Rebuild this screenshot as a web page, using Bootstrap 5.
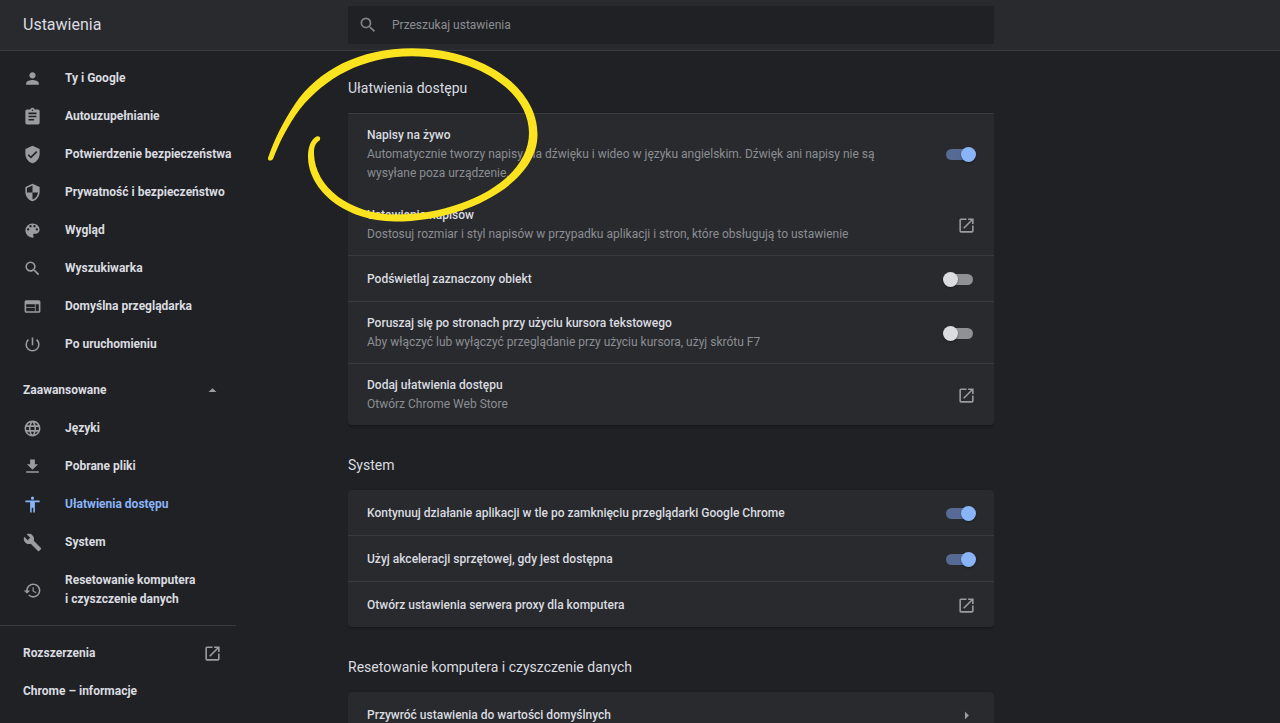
<!DOCTYPE html>
<html lang="pl" data-bs-theme="dark">
<head>
<meta charset="utf-8">
<meta name="viewport" content="width=device-width, initial-scale=1">
<title>Ustawienia</title>
<link href="https://cdn.jsdelivr.net/npm/bootstrap@5.3.0/dist/css/bootstrap.min.css" rel="stylesheet">
<style>
  :root { --page: #202124; --panel: #292a2d; --line: #3a3b3f; --text: #dadce0; --muted: #8b8e93; --icon: #9a9ca0; --accent: #8ab4f8; }
  body { background: var(--page); color: var(--text); font: 500 12px/19px Roboto, "Noto Sans", sans-serif; }
  h1, h2 { color: var(--text); }
  a { color: inherit; text-decoration: none; }
  svg { display: block; fill: currentColor; flex: none; }
  .columns { display: grid; grid-template-columns: minmax(260px, 348fr) minmax(0, 646px) 286fr; }
  .topbar { background: var(--panel); border-bottom: 1px solid var(--line); height: 51px; z-index: 2; }
  .app-title { font-size: 16px; font-weight: 400; padding-left: 23px; }
  .search-box { background: var(--page); color: #7f8287; height: 38px; padding: 0 10px; gap: 14px; }
  .search-box input { font-size: 12px; line-height: 19px; color: var(--text); border-radius: 0; }
  .search-box input::placeholder { color: #8b8e93; opacity: 1; }
  .search-box input:focus { box-shadow: none; }
  .ico { width: 19px; height: 19px; color: var(--icon); }
  .side { width: 240px; padding-top: 8px; }
  .side-link { display: flex; align-items: center; width: 100%; min-height: 38px; padding: 10px 0 9px 23px; gap: 23px; font-weight: 700; color: var(--text); text-align: left; }
  .side-link.justify-content-between { padding-right: 18px; }
  .side-link.active, .side-link.active .ico { color: var(--accent); }
  .side-button { background: none; border: 0; margin-top: 8px; }
  .side-rest { border-top: 1px solid var(--line); margin: 7px 4px 0 0; padding-top: 8px; }
  .side-rest .side-link.justify-content-between { padding-right: 14px; }
  .content-pane { padding-bottom: 40px; scrollbar-width: none; overflow-y: auto; }
  .content-pane::-webkit-scrollbar { display: none; }
  h2 { font-size: 14px; line-height: 19px; font-weight: 400; margin: 0; padding: 31px 0 15px; box-sizing: content-box; }
  section:first-child h2 { padding-top: 28px; }
  .panel { background: var(--panel); border-radius: 4px; box-shadow: 0 1px 3px #0006; }
  .setting { display: flex; align-items: center; justify-content: space-between; gap: 60px; min-height: 45px; padding: 12px 18px 11px 19px; font-weight: 500; }
  .setting.lined { border-top: 1px solid var(--line); min-height: 46px; }
  .hint { color: var(--muted); font-weight: 400; }
  .toggle.form-check-input { appearance: none; position: relative; flex: none; width: 27px; height: 11px; margin: 0 3px 0 0; border: 0; border-radius: 6px; background: #8f9194; }
  .toggle::before { content: ""; position: absolute; width: 15px; height: 15px; border-radius: 50%; top: -2px; left: -3px; background: #dadce0; box-shadow: 0 1px 2px #0006; }
  .toggle.form-check-input:checked { background: #566a94; }
  .toggle:checked::before { left: auto; right: -3px; background: var(--accent); }
  .marker { position: absolute; left: -88px; top: 40px; width: 290px; height: 190px; fill: #fbe41f; pointer-events: none; }
</style>
</head>
<body>
<svg class="d-none" aria-hidden="true">
  <symbol id="launch" viewBox="0 0 24 24"><path d="M19 19H5V5h7V3H5a2 2 0 0 0-2 2v14a2 2 0 0 0 2 2h14c1.100 0 2-.9 2-2v-7h-2v7zM14 3v2h3.590l-9.830 9.830 1.410 1.410L19 6.410V10h2V3h-7z"/></symbol>
  <symbol id="search" viewBox="0 0 24 24"><path d="M15.500 14h-.79l-.28-.27A6.471 6.471 0 0 0 16 9.500 6.500 6.500 0 1 0 9.500 16c1.610 0 3.090-.59 4.230-1.570l.27.28v.79l5 4.990L20.490 19l-4.990-5zm-6 0C7.010 14 5 11.990 5 9.500S7.010 5 9.500 5 14 7.010 14 9.500 11.990 14 9.500 14z"/></symbol>
</svg>
<div class="vh-100 d-flex flex-column overflow-hidden">
  <header class="topbar columns align-items-center flex-shrink-0 position-relative">
    <h1 class="app-title m-0">Ustawienia</h1>
    <div class="position-relative h-100 d-flex align-items-center">
      <label class="search-box d-flex align-items-center w-100">
        <svg width="20" height="20"><use href="#search"/></svg>
        <input type="search" class="form-control border-0 bg-transparent p-0" placeholder="Przeszukaj ustawienia" aria-label="Przeszukaj ustawienia">
      </label>
      <svg class="marker" viewBox="260 40 290 190" aria-hidden="true"><path d="M268 158C274 140 283 122 295 104C318 70 360 48.300 412 48.300C480 48.500 538 86 537.500 135C537 184 465 221.500 395 221.500C345 221.500 307 190 308 155C308.300 147 311 139 317 136.300C320 136 321 138 319.500 140.500C315 143 313.800 148 314 154C315 187 350 214.500 396 214.500C462 214.500 529 180 529 133C529 90 475 56.200 412 56.200C362 56.500 325 78 300 109C288 125 279 143 273 159C271 161.500 267.500 161 268 158Z"/></svg>
    </div>
  </header>

  <div class="columns flex-grow-1 overflow-hidden">
    <nav class="side" aria-label="Ustawienia">
      <a class="side-link" href="#"><svg class="ico" viewBox="0 0 24 24"><path d="M12 12c2.210 0 4-1.790 4-4s-1.790-4-4-4-4 1.790-4 4 1.790 4 4 4zm0 2c-2.670 0-8 1.340-8 4v2h16v-2c0-2.660-5.330-4-8-4z"/></svg>Ty i Google</a>
      <a class="side-link" href="#"><svg class="ico" viewBox="0 0 24 24"><path d="M19 3h-4.180C14.400 1.840 13.300 1 12 1s-2.400.84-2.820 2H5a2 2 0 0 0-2 2v15a2 2 0 0 0 2 2h14a2 2 0 0 0 2-2V5a2 2 0 0 0-2-2zm-7 0a1 1 0 1 1 0 2 1 1 0 0 1 0-2zm2 14H7v-2h7v2zm3-4H7v-2h10v2zm0-4H7V7h10v2z"/></svg>Autouzupełnianie</a>
      <a class="side-link" href="#"><svg class="ico" viewBox="0 0 24 24"><path d="M12 1 3 5v6c0 5.550 3.840 10.740 9 12 5.160-1.260 9-6.450 9-12V5l-9-4zm-2 16-4-4 1.410-1.410L10 14.170l6.590-6.590L18 9l-8 8z"/></svg>Potwierdzenie bezpieczeństwa</a>
      <a class="side-link" href="#"><svg class="ico" viewBox="0 0 24 24"><path d="M12 1 3 5v6c0 5.550 3.840 10.740 9 12 5.160-1.260 9-6.450 9-12V5l-9-4zm0 10.990h7c-.53 4.120-3.280 7.790-7 8.940V12H5V6.300l7-3.110v8.800z"/></svg>Prywatność i bezpieczeństwo</a>
      <a class="side-link" href="#"><svg class="ico" viewBox="0 0 24 24"><path d="M12 3a9 9 0 0 0 0 18 1.500 1.500 0 0 0 1.500-1.500c0-.39-.15-.74-.39-1.010-.23-.26-.38-.61-.38-.99a1.500 1.500 0 0 1 1.500-1.500H16c2.760 0 5-2.240 5-5 0-4.420-4.030-8-9-8zm-5.500 9a1.500 1.500 0 1 1 0-3 1.500 1.500 0 0 1 0 3zm3-4a1.500 1.500 0 1 1 0-3 1.500 1.500 0 0 1 0 3zm5 0a1.500 1.500 0 1 1 0-3 1.500 1.500 0 0 1 0 3zm3 4a1.500 1.500 0 1 1 0-3 1.500 1.500 0 0 1 0 3z"/></svg>Wygląd</a>
      <a class="side-link" href="#"><svg class="ico"><use href="#search"/></svg>Wyszukiwarka</a>
      <a class="side-link" href="#"><svg class="ico" viewBox="0 0 24 24"><path d="M20 4H4c-1.100 0-1.990.9-1.990 2L2 18c0 1.100.9 2 2 2h16c1.100 0 2-.9 2-2V6c0-1.100-.9-2-2-2zm-5 14H4v-4h11v4zm0-5H4V9h11v4zm5 5h-4V9h4v9z"/></svg>Domyślna przeglądarka</a>
      <a class="side-link" href="#"><svg class="ico" viewBox="0 0 24 24"><path d="M13 3h-2v10h2V3zm4.830 2.170-1.420 1.420A6.920 6.920 0 0 1 19 12a7 7 0 1 1-11.420-5.420L6.170 5.170A8.932 8.932 0 0 0 3 12a9 9 0 0 0 18 0c0-2.740-1.230-5.180-3.170-6.830z"/></svg>Po uruchomieniu</a>
      <button type="button" class="side-link side-button justify-content-between" aria-expanded="true">Zaawansowane<svg class="ico" viewBox="0 0 24 24"><path d="m7 14 5-5 5 5z"/></svg></button>
      <a class="side-link" href="#"><svg class="ico" viewBox="0 0 24 24"><path d="M11.990 2C6.470 2 2 6.480 2 12s4.470 10 9.990 10C17.520 22 22 17.520 22 12S17.520 2 11.990 2zm6.930 6h-2.950a15.650 15.650 0 0 0-1.380-3.560A8.030 8.030 0 0 1 18.920 8zM12 4.040c.83 1.200 1.480 2.530 1.910 3.960h-3.820c.43-1.430 1.080-2.760 1.910-3.960zM4.260 14C4.100 13.360 4 12.690 4 12s.1-1.360.26-2h3.380c-.08.66-.14 1.320-.14 2s.06 1.340.14 2H4.260zm.82 2h2.950c.32 1.250.78 2.450 1.380 3.560A7.987 7.987 0 0 1 5.080 16zm2.950-8H5.080a7.987 7.987 0 0 1 4.330-3.560A15.650 15.650 0 0 0 8.030 8zM12 19.960c-.83-1.200-1.480-2.530-1.910-3.960h3.820c-.43 1.430-1.080 2.760-1.910 3.960zM14.340 14H9.660c-.09-.66-.16-1.320-.16-2s.07-1.350.16-2h4.680c.09.65.16 1.320.16 2s-.07 1.340-.16 2zm.25 5.560c.6-1.110 1.060-2.310 1.380-3.560h2.950a8.030 8.030 0 0 1-4.330 3.560zM16.360 14c.08-.66.14-1.320.14-2s-.06-1.340-.14-2h3.380c.16.640.26 1.310.26 2s-.1 1.360-.26 2h-3.380z"/></svg>Języki</a>
      <a class="side-link" href="#"><svg class="ico" viewBox="0 0 24 24"><path d="M19 9h-4V3H9v6H5l7 7 7-7zM4 18v2h16v-2H4z"/></svg>Pobrane pliki</a>
      <a class="side-link active" href="#" aria-current="page"><svg class="ico" viewBox="0 0 24 24"><path d="M12 2a2 2 0 1 1 0 4 2 2 0 0 1 0-4zm9 7h-6v13h-2v-6h-2v6H9V9H3V7h18v2z"/></svg>Ułatwienia dostępu</a>
      <a class="side-link" href="#"><svg class="ico" viewBox="0 0 24 24"><path d="m22.700 19-9.100-9.100c.9-2.300.4-5-1.500-6.900-2-2-5-2.400-7.400-1.300L9 6 6 9 1.600 4.700C.4 7.100.9 10.100 2.900 12.100c1.900 1.900 4.600 2.400 6.900 1.500l9.100 9.100c.4.400 1 .4 1.400 0l2.300-2.300c.5-.4.500-1.100.1-1.400z"/></svg>System</a>
      <a class="side-link" href="#"><svg class="ico" viewBox="0 0 24 24"><path d="M13 3a9 9 0 0 0-9 9H1l3.890 3.890.07.14L9 12H6c0-3.870 3.130-7 7-7s7 3.130 7 7-3.130 7-7 7a6.920 6.920 0 0 1-4.940-2.060l-1.420 1.420A8.954 8.954 0 0 0 13 21a9 9 0 0 0 0-18zm-1 5v5l4.280 2.540.72-1.210-3.500-2.080V8H12z"/></svg><span>Resetowanie komputera<br>i czyszczenie danych</span></a>
      <div class="side-rest">
        <a class="side-link justify-content-between" href="#">Rozszerzenia<svg class="ico"><use href="#launch"/></svg></a>
        <a class="side-link" href="#">Chrome – informacje</a>
      </div>
    </nav>

    <main class="content-pane">
      <section>
        <h2>Ułatwienia dostępu</h2>
        <div class="panel">
          <label class="setting lined"><span>Napisy na żywo<span class="hint d-block">Automatycznie tworzy napisy dla dźwięku i wideo w języku angielskim. Dźwięk ani napisy nie są wysyłane poza urządzenie.</span></span><input type="checkbox" role="switch" class="form-check-input toggle" checked></label>
          <a class="setting" href="#"><span>Ustawienia napisów<span class="hint d-block">Dostosuj rozmiar i styl napisów w przypadku aplikacji i stron, które obsługują to ustawienie</span></span><svg class="ico"><use href="#launch"/></svg></a>
          <label class="setting lined">Podświetlaj zaznaczony obiekt<input type="checkbox" role="switch" class="form-check-input toggle"></label>
          <label class="setting lined"><span>Poruszaj się po stronach przy użyciu kursora tekstowego<span class="hint d-block">Aby włączyć lub wyłączyć przeglądanie przy użyciu kursora, użyj skrótu F7</span></span><input type="checkbox" role="switch" class="form-check-input toggle"></label>
          <a class="setting lined" href="#"><span>Dodaj ułatwienia dostępu<span class="hint d-block">Otwórz Chrome Web Store</span></span><svg class="ico"><use href="#launch"/></svg></a>
        </div>
      </section>
      <section>
        <h2>System</h2>
        <div class="panel">
          <label class="setting">Kontynuuj działanie aplikacji w tle po zamknięciu przeglądarki Google Chrome<input type="checkbox" role="switch" class="form-check-input toggle" checked></label>
          <label class="setting lined">Użyj akceleracji sprzętowej, gdy jest dostępna<input type="checkbox" role="switch" class="form-check-input toggle" checked></label>
          <a class="setting lined" href="#">Otwórz ustawienia serwera proxy dla komputera<svg class="ico"><use href="#launch"/></svg></a>
        </div>
      </section>
      <section>
        <h2>Resetowanie komputera i czyszczenie danych</h2>
        <div class="panel">
          <a class="setting" href="#">Przywróć ustawienia do wartości domyślnych<svg class="ico" viewBox="0 0 24 24"><path d="m10 17 5-5-5-5z"/></svg></a>
        </div>
      </section>
    </main>
  </div>
</div>
<script src="https://cdn.jsdelivr.net/npm/bootstrap@5.3.0/dist/js/bootstrap.bundle.min.js"></script>
</body>
</html>
